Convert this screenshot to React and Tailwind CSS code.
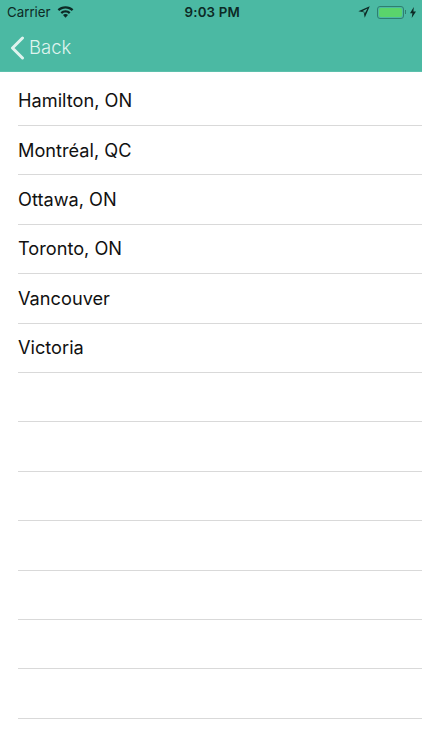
const rows = ["Hamilton, ON","Montréal, QC","Ottawa, ON","Toronto, ON","Vancouver","Victoria","","","","","","",""];

export default function App() {
  return (
    <div className="w-[422px] h-[750px] overflow-hidden bg-white font-['Inter','Liberation_Sans',sans-serif]">
      <header className="h-[72px] bg-[#4bb9a3] border-b border-[#5cc0ac]">
        <div className="h-[25px] flex items-center justify-between pl-[7px] pr-[6px] text-[#0d2a25]">
          <div className="flex items-center gap-[6px]">
            <span className="text-[13.300px]">Carrier</span>
            <svg width="17" height="13" viewBox="0 0 17 13" fill="#0d2a25" className="-mt-[3px]">
              <path d="M8.5 1.2C5.3 1.2 2.6 2.4.6 4.3l1.6 1.8C3.9 4.5 6.1 3.6 8.5 3.6s4.6.9 6.3 2.5l1.6-1.8C14.4 2.4 11.7 1.2 8.5 1.2z" />
              <path d="M8.5 5.2c-2 0-3.7.7-5 2l1.600 1.800c.9-.9 2.100-1.400 3.400-1.400s2.500.5 3.400 1.400l1.600-1.800c-1.300-1.300-3-2-5-2z" />
              <path d="M8.500 9c-1 0-1.900.4-2.500 1l2.500 2.800L11 10c-.6-.6-1.500-1-2.500-1z" />
            </svg>
          </div>
          <span className="text-[13.300px] font-semibold tracking-[0.2px] -ml-[7px]">9:03 PM</span>
          <div className="flex items-center gap-[6px]">
            <svg width="12" height="12" viewBox="0 0 10 10" fill="#0d2a25" className="mr-[1px] -mt-[1px]"><path d="M9.800.2L.3 4.400l4.500.8.800 4.600zM7.900 2.100L5.500 6.500l-.2-1.800-1.800-.3z" fillRule="evenodd" /></svg>
            <div className="flex items-center mr-[4px] -mt-[1px]">
              <div className="w-[27px] h-[13px] rounded-[3px] border border-[#2f7f70] p-[1px] bg-[#4bb9a3]">
                <div className="w-full h-full rounded-[2px] bg-[#5ad46c]" />
              </div>
              <div className="w-[1px] h-[4px] bg-[#2f7f70] ml-[1px]" />
            </div>
            <svg width="6" height="11" viewBox="0 0 6 11" fill="#0d2a25" className="-ml-[6px] -mt-[1px]"><path d="M3.800 0L0 6.300h2.400L1.700 11 6 4.400H3.400z" /></svg>
          </div>
        </div>
        <div className="flex items-center h-[46px] pl-[10px] text-[#dff3ee]">
          <svg width="15" height="24" viewBox="0 0 15 24" fill="none" stroke="currentColor" strokeWidth="3" strokeLinecap="round" strokeLinejoin="round">
            <path d="M12.500 2L2.500 12l10 10" />
          </svg>
          <span className="text-[18.500px] ml-[4px] font-light">Back</span>
        </div>
      </header>
      <ul className="pt-[4.600px] pl-[18px]">
        {rows.map((r, i) => (
          <li key={i} className="h-[49.400px] border-b border-[#d9d9d9] flex items-center text-[18.200px] text-[#111111]">
            {r}
          </li>
        ))}
      </ul>
    </div>
  );
}
